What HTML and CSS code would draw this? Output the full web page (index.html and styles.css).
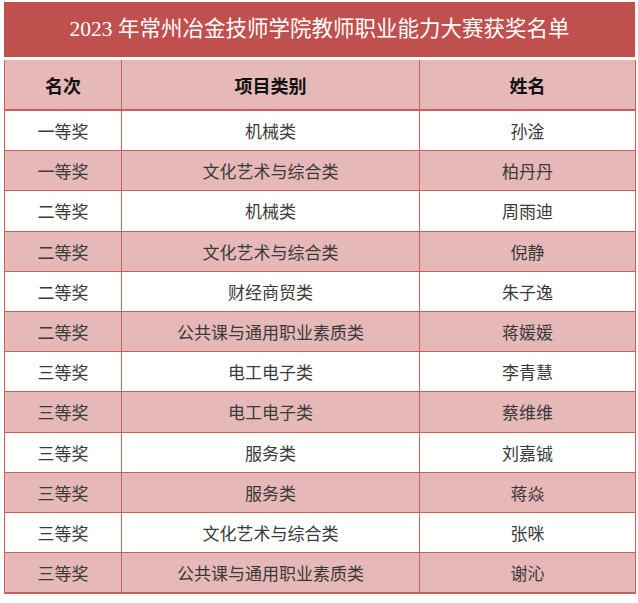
FILE: index.html
```html
<!DOCTYPE html>
<html lang="zh">
<head>
<meta charset="utf-8">
<link rel="stylesheet" href="styles.css">
</head>
<body>
<div class="page">
  <div class="title">2023 年常州冶金技师学院教师职业能力大赛获奖名单</div>
  <table class="list">
    <colgroup><col class="c1"><col class="c2"><col class="c3"></colgroup>
    <thead>
      <tr><th>名次</th><th>项目类别</th><th>姓名</th></tr>
    </thead>
    <tbody>
      <tr><td>一等奖</td><td>机械类</td><td>孙淦</td></tr>
      <tr class="alt"><td>一等奖</td><td>文化艺术与综合类</td><td>柏丹丹</td></tr>
      <tr><td>二等奖</td><td>机械类</td><td>周雨迪</td></tr>
      <tr class="alt"><td>二等奖</td><td>文化艺术与综合类</td><td>倪静</td></tr>
      <tr><td>二等奖</td><td>财经商贸类</td><td>朱子逸</td></tr>
      <tr class="alt"><td>二等奖</td><td>公共课与通用职业素质类</td><td>蒋媛媛</td></tr>
      <tr><td>三等奖</td><td>电工电子类</td><td>李青慧</td></tr>
      <tr class="alt"><td>三等奖</td><td>电工电子类</td><td>蔡维维</td></tr>
      <tr><td>三等奖</td><td>服务类</td><td>刘嘉铖</td></tr>
      <tr class="alt"><td>三等奖</td><td>服务类</td><td>蒋焱</td></tr>
      <tr><td>三等奖</td><td>文化艺术与综合类</td><td>张咪</td></tr>
      <tr class="alt"><td>三等奖</td><td>公共课与通用职业素质类</td><td>谢沁</td></tr>
    </tbody>
  </table>
</div>
</body>
</html>
```
FILE: styles.css
```css
html, body {
  margin: 0;
  padding: 0;
  background: #ffffff;
}
.page {
  padding: 2px 3px 0 4px;
  width: 631px;
  font-family: "Liberation Serif", "Noto Sans CJK SC", serif;
}
.title {
  height: 55px;
  background: #c0504d;
  color: #ffffff;
  font-size: 21.5px;
  line-height: 55px;
  text-align: center;
}
.list {
  margin-top: 3px;
  width: 631px;
  border-collapse: collapse;
  table-layout: fixed;
}
.c1 { width: 117px; }
.c2 { width: 298px; }
.c3 { width: 216px; }
.list th, .list td {
  border: 1px solid #c9605c;
  text-align: center;
  padding: 0;
}
.list th {
  height: 49px;
  background: #e6b8b7;
  color: #111111;
  font-size: 18px;
  font-weight: bold;
  border-top: none;
  border-bottom: 2px solid #c9605c;
}
.list td {
  height: 39.2px;
  font-size: 17px;
  color: #3a3a3a;
  background: #ffffff;
}
.list tr.alt td {
  background: #e6b8b7;
}
.list tbody tr:last-child td {
  border-bottom: 2px solid #c9605c;
}
```
